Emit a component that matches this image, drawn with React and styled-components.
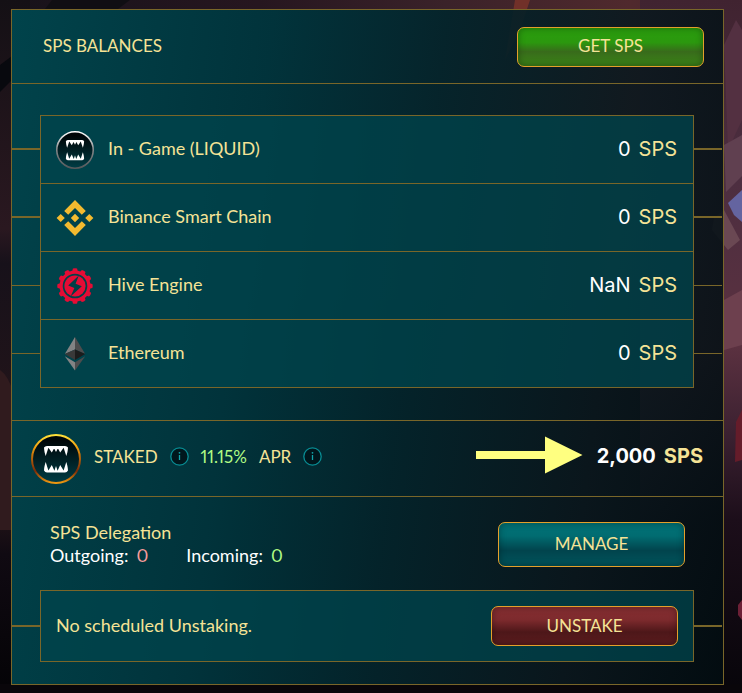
import styled, { createGlobalStyle } from "styled-components";

const GlobalStyle = createGlobalStyle`
  * {
    box-sizing: border-box;
  }

  body {
    margin: 0;
    background-color: #0b080d;
    font-family: Lato, sans-serif;
    font-size: 18px;
    font-variant-numeric: proportional-nums;
    line-height: 23px;
    color: #f5e396;
  }
`;

//Styled Component part
const Page = styled.div`
  position: relative;
  min-height: 100vh;
  padding: 9px 18px 8px 11px;
`;

const Backdrop = styled.svg`
  position: absolute;
  inset: 0;
  width: 100%;
  height: 100%;
`;

const Panel = styled.main`
  position: relative;
  border: 1px solid #796629;
  background: linear-gradient(
    97deg,
    rgba(0, 68, 76, 0.98) 0%,
    rgba(0, 52, 60, 0.97) 33%,
    rgba(3, 36, 43, 0.95) 55%,
    rgba(9, 23, 29, 0.88) 80%,
    rgba(2, 13, 17, 0.88) 100%
  );
`;

const Header = styled.header`
  display: flex;
  align-items: center;
  justify-content: space-between;
  height: 74px;
  padding: 0 19px 0 31px;
  border-bottom: 1px solid #796629;
`;

const Title = styled.h1`
  margin: 0;
  padding-bottom: 2px;
  font-size: 17px;
  font-weight: 400;
`;

const tones = {
  green: "linear-gradient(#2a9d0e 0%, #2b980e 38%, #386b1b 62%, #3a7d18 90%)",
  teal: "linear-gradient(#017176 0%, #016c71 30%, #01444d 64%, #015058 90%)",
  red: "linear-gradient(#852e31 0%, #7d2a2d 34%, #4d1719 66%, #571b1d 90%)",
};

const Button = styled.button`
  width: 187px;
  height: ${({ $tall }) => ($tall ? 45 : 40)}px;
  padding: 0 0 2px;
  border: 1px solid #e4a02a;
  border-radius: 7px;
  background: ${({ $tone }) => tones[$tone]};
  box-shadow: inset 0 0 7px rgba(0, 0, 0, 0.35);
  color: #f5e396;
  font-family: inherit;
  font-size: 17px;
  cursor: pointer;
`;

const Balances = styled.ul`
  margin: 0;
  padding: 31px 1px 32px 0;
  list-style: none;
`;

const Row = styled.li`
  display: flex;
  align-items: center;
`;

const Connector = styled.span`
  flex: 0 0 28px;
  height: ${({ $thick }) => ($thick ? 2 : 1)}px;
  background-color: #796629;
`;

const Cell = styled.div`
  flex: 1;
  display: flex;
  align-items: center;
  gap: 14px;
  height: ${({ $last }) => ($last ? 69 : 68)}px;
  padding: 0 16px 0 15px;
  border: 1px solid #796629;
  border-bottom-width: ${({ $last }) => ($last ? 1 : 0)}px;
  background-color: rgba(0, 68, 76, 0.76);
`;

const Label = styled.span`
  padding-bottom: 2px;
`;

const Amount = styled.span`
  display: flex;
  gap: 8px;
  margin-left: auto;
  font-family: Inter, sans-serif;
  font-size: 20px;
  font-weight: ${({ $bold }) => ($bold ? 700 : 400)};
`;

const Value = styled.span`
  color: ${({ $color }) => $color || "#ffffff"};
`;

const Staked = styled.section`
  display: flex;
  align-items: center;
  gap: 13px;
  height: 77px;
  padding: 0 20px 0 19px;
  border-top: 1px solid #796629;
  border-bottom: 1px solid #796629;
`;

const Apr = styled.div`
  display: flex;
  align-items: center;
  gap: 12px;
  padding-bottom: 4px;
  font-size: 17px;
`;

const InfoButton = styled.button`
  display: flex;
  padding: 0;
  border: 0;
  background: none;
  cursor: pointer;
`;

const StakedTotal = styled.div`
  display: flex;
  align-items: center;
  gap: 14px;
  margin-left: auto;
  padding-bottom: 4px;
`;

const Delegation = styled.section`
  display: flex;
  align-items: center;
  justify-content: space-between;
  height: 93px;
  padding: 2px 38px 0 38px;
`;

const DelegationInfo = styled.div`
  padding-bottom: 2px;
`;

const Counts = styled.div`
  display: flex;
  gap: 38px;
`;

const Count = styled.span`
  display: flex;
  gap: 8px;
  color: #ffffff;
`;

const Unstaking = styled.section`
  display: flex;
  align-items: center;
  padding: 0 1px 22px 0;
`;

const UnstakeBox = styled.div`
  flex: 1;
  display: flex;
  align-items: center;
  justify-content: space-between;
  height: 72px;
  padding: 0 15px;
  border: 1px solid #796629;
  background-color: rgba(0, 68, 76, 0.76);
`;

// Icons
const FangsIcon = ({ size, id, rim }) => (
  <svg width={size} height={size} viewBox="0 0 50 50" aria-hidden="true">
    <defs>
      <linearGradient id={`${id}-rim`} x1="0" y1="0" x2="0" y2="1">
        {rim.map((color, i) => (
          <stop key={i} offset={i / (rim.length - 1)} stopColor={color} />
        ))}
      </linearGradient>
      <linearGradient id={`${id}-face`} x1="0" y1="0" x2="0" y2="1">
        <stop offset="0.1" stopColor="#000507" />
        <stop offset="1" stopColor="#003d45" />
      </linearGradient>
    </defs>
    <circle
      cx="25"
      cy="25"
      r="24"
      fill={`url(#${id}-face)`}
      stroke={`url(#${id}-rim)`}
      strokeWidth="2"
    />
    <path
      d="M13 13.5 Q14 12 16 12 H34 Q36 12 37 13.5 C36.8 17 36.2 19.5 35.3 22 L32.6 13.8 L29.2 18.6 L26.4 13.4 L25 13.4 L23.6 13.4 L20.8 18.6 L17.4 13.8 L14.7 22 C13.8 19.5 13.2 17 13 13.5Z M22.4 13 H27.6 L25 18Z"
      fill="#fff"
    />
    <path
      d="M13 36.5 Q14 38.5 16 38.5 H34 Q36 38.5 37 36.5 C36.8 33 36.2 30.5 35.3 28 L32.6 36.6 L29.2 31 L26.6 36.8 L25 32 L23.4 36.8 L20.8 31 L17.4 36.6 L14.7 28 C13.8 30.5 13.2 33 13 36.5Z"
      fill="#fff"
    />
  </svg>
);

const BinanceIcon = () => (
  <svg width="38" height="38" viewBox="0 0 38 38" aria-hidden="true">
    <path
      fill="#f3ba2f"
      d="M12.2 15.8 L19 9 L25.8 15.8 L29.8 11.9 L19 1 L8.2 11.9Z M0.6 19 L4.7 14.9 L8.8 19 L4.7 23.1Z M12.2 22.2 L19 29 L25.8 22.2 L29.8 26.1 L19 37 L8.2 26.1Z M29.2 19 L33.3 14.9 L37.4 19 L33.3 23.1Z M14.8 19 L19 14.8 L23.2 19 L19 23.2Z"
    />
  </svg>
);

const HiveIcon = () => (
  <svg width="38" height="38" viewBox="0 0 38 38" aria-hidden="true">
    <g fill="#e50c35">
      {Array.from({ length: 12 }, (_, i) => (
        <path
          key={i}
          d="M15.9 6 L16.9 1.6 Q19 0.8 21.1 1.6 L22.1 6Z"
          transform={`rotate(${i * 30} 19 19)`}
        />
      ))}
    </g>
    <circle cx="19" cy="19" r="13.9" fill="none" stroke="#e50c35" strokeWidth="3.2" />
    <circle cx="19" cy="19" r="10.6" fill="#e50c35" />
    <path
      d="M22.8 8.5 L12.2 18.6 L18.4 21 L14.6 29.5 L25.8 19.2 L19.6 16.8Z"
      fill="#013f47"
    />
  </svg>
);

const EthereumIcon = () => (
  <svg width="38" height="38" viewBox="0 0 38 38" aria-hidden="true">
    <path d="M19 2 L8.8 19 L19 14.4Z" fill="#828384" />
    <path d="M19 2 L29.2 19 L19 14.4Z" fill="#4c4c4d" />
    <path d="M8.8 19 L19 14.4 V25Z" fill="#393939" />
    <path d="M29.2 19 L19 14.4 V25Z" fill="#1c1c1c" />
    <path d="M8.8 21.2 L19 27.2 V35.5Z" fill="#828384" />
    <path d="M29.2 21.2 L19 27.2 V35.5Z" fill="#4c4c4d" />
  </svg>
);

const InfoIcon = () => (
  <svg width="19" height="19" viewBox="0 0 19 19" aria-hidden="true">
    <circle cx="9.5" cy="9.5" r="8.7" fill="#00171d" stroke="#088d94" strokeWidth="1.3" />
    <path d="M9.5 8 V13" stroke="#11a4aa" strokeWidth="1.3" />
    <circle cx="9.5" cy="5.8" r="0.9" fill="#11a4aa" />
  </svg>
);

const ArrowIcon = () => (
  <svg width="107" height="42" viewBox="0 0 107 42" aria-hidden="true">
    <path d="M0 15 H69 V0.5 L106.5 19 L69 37.5 V23 H0Z" fill="#ffff80" />
  </svg>
);

// Painted scenery behind the panel
const Scenery = () => (
  <Backdrop viewBox="0 0 742 693" preserveAspectRatio="none" aria-hidden="true">
    <defs>
      <linearGradient id="sky" x1="0" y1="0" x2="1" y2="0">
        <stop offset="0" stopColor="#17121a" />
        <stop offset="0.35" stopColor="#26161f" />
        <stop offset="0.6" stopColor="#3a2229" />
        <stop offset="0.85" stopColor="#50292d" />
        <stop offset="1" stopColor="#40232f" />
      </linearGradient>
      <linearGradient id="cliff" x1="0" y1="0" x2="0" y2="1">
        <stop offset="0" stopColor="#402330" />
        <stop offset="0.25" stopColor="#4c2e40" />
        <stop offset="0.5" stopColor="#5b3140" />
        <stop offset="0.63" stopColor="#3a2030" />
        <stop offset="0.75" stopColor="#1c0e1a" />
        <stop offset="1" stopColor="#07050a" />
      </linearGradient>
      <linearGradient id="wall" x1="0" y1="0" x2="0" y2="1">
        <stop offset="0" stopColor="#141015" />
        <stop offset="0.33" stopColor="#2a1820" />
        <stop offset="0.38" stopColor="#17111a" />
        <stop offset="0.72" stopColor="#281619" />
        <stop offset="0.8" stopColor="#100a12" />
        <stop offset="1" stopColor="#040306" />
      </linearGradient>
    </defs>
    <rect width="742" height="693" fill="#120d13" />
    <rect width="742" height="300" fill="url(#sky)" />
    <path d="M45 9 L52 0 H130 L118 9Z" fill="#100e13" />
    <path d="M515 0 H530 L520 30 L505 60Z M648 0 H682 L668 40 L655 60Z" fill="#713029" />
    <rect width="30" height="693" fill="url(#wall)" />
    <path d="M0 65 L12 56 V80 L0 92Z" fill="#08090e" />
    <path d="M0 370 Q9 376 14 395 V530 H0Z" fill="#301b1e" />
    <rect x="640" width="102" height="693" fill="url(#cliff)" />
    <path d="M724 45 L736 20 L742 30 V120 L728 150Z" fill="#533041" />
    <path d="M724 145 L742 135 V176 L726 192Z" fill="#604050" />
    <path d="M728 203 L742 190 V222 L734 215Z" fill="#6464a0" />
    <path d="M714 218 L724 210 L740 240 L728 250 L712 230Z" fill="#6a4853" />
    <path d="M724 300 L742 290 V345 L724 350Z" fill="#6d404e" />
    <path d="M736 422 L742 410 V460 L735 462Z" fill="#651c2a" />
    <path d="M738 605 L742 600 V620 L738 615Z" fill="#6c2036" />
    <rect y="684" width="742" height="9" fill="#09060a" />
  </Backdrop>
);

const rows = [
  {
    name: "In - Game (LIQUID)",
    value: "0",
    icon: <FangsIcon size={38} id="liquid" rim={["#ffffff", "#87898b", "#55585a"]} />,
    thick: true,
  },
  { name: "Binance Smart Chain", value: "0", icon: <BinanceIcon />, thick: true },
  { name: "Hive Engine", value: "NaN", icon: <HiveIcon /> },
  { name: "Ethereum", value: "0", icon: <EthereumIcon /> },
];

// Component
const BalanceRow = ({ name, value, icon, thick, last }) => {
  return (
    <Row>
      <Connector $thick={thick} />
      <Cell $last={last}>
        {icon}
        <Label>{name}</Label>
        <Amount>
          <Value>{value}</Value> SPS
        </Amount>
      </Cell>
      <Connector $thick={thick} />
    </Row>
  );
};

const App = () => {
  return (
    <Page>
      <GlobalStyle />
      <Scenery />
      <Panel>
        <Header>
          <Title>SPS BALANCES</Title>
          <Button $tone="green">GET SPS</Button>
        </Header>

        <Balances>
          {rows.map((row, i) => (
            <BalanceRow key={row.name} {...row} last={i === rows.length - 1} />
          ))}
        </Balances>

        <Staked>
          <FangsIcon
            size={50}
            id="staked"
            rim={["#ffe03a", "#f0a010", "#b35c08", "#7a2a08", "#f09a10"]}
          />
          <Apr>
            <span>STAKED</span>
            <InfoButton aria-label="About staking">
              <InfoIcon />
            </InfoButton>
            <Value $color="#b0fb84">11.15%</Value>
            <span>APR</span>
            <InfoButton aria-label="About APR">
              <InfoIcon />
            </InfoButton>
          </Apr>
          <StakedTotal>
            <ArrowIcon />
            <Amount $bold>
              <Value>2,000</Value> SPS
            </Amount>
          </StakedTotal>
        </Staked>

        <Delegation>
          <DelegationInfo>
            <div>SPS Delegation</div>
            <Counts>
              <Count>
                Outgoing: <Value $color="#f79c9c">0</Value>
              </Count>
              <Count>
                Incoming: <Value $color="#b0fb84">0</Value>
              </Count>
            </Counts>
          </DelegationInfo>
          <Button $tone="teal" $tall>
            MANAGE
          </Button>
        </Delegation>

        <Unstaking>
          <Connector $thick />
          <UnstakeBox>
            <Label>No scheduled Unstaking.</Label>
            <Button $tone="red">UNSTAKE</Button>
          </UnstakeBox>
          <Connector $thick />
        </Unstaking>
      </Panel>
    </Page>
  );
};

export default App;
